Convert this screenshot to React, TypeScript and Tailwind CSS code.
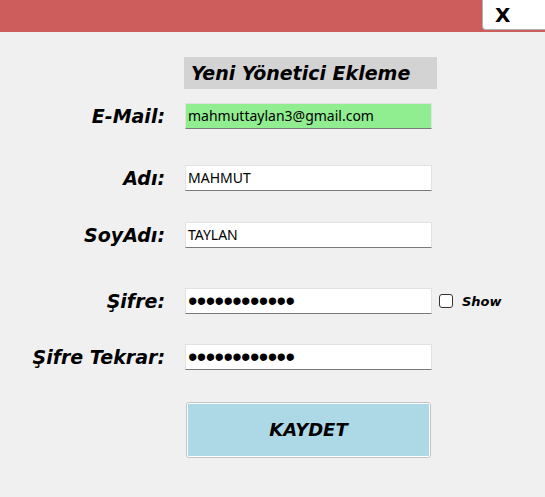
import React from "react";

const comic = { fontFamily: '"DejaVu Sans", sans-serif' };
const ui = { fontFamily: '"Noto Sans", "Open Sans", sans-serif' };

function Field({ value, bg = "bg-white", password = false }: { value: string; bg?: string; password?: boolean }) {
  return (
    <div
      className={`w-[247px] h-[26px] ${bg} border border-[#e2e2e2] border-b-[#7a7a7a] flex items-center pl-[2px] text-[14px] text-black leading-none`}
      style={ui}
    >
      {password ? (
        <span className="text-[27px] tracking-[-0.6px] leading-[20px] h-[20px] flex items-center" style={{ fontFamily: '"Liberation Sans", sans-serif' }}>
          {value}
        </span>
      ) : (
        value
      )}
    </div>
  );
}

function Row({ label, children, className = "" }: { label: string; children: React.ReactNode; className?: string }) {
  return (
    <div className={`flex items-center h-[26px] ${className}`}>
      <div className="w-[165px] text-right text-[19px] font-bold italic text-black leading-none whitespace-nowrap" style={comic}>
        {label}
      </div>
      <div className="ml-[20px] flex items-center">{children}</div>
    </div>
  );
}

export default function App() {
  const dots = "••••••••••••";
  return (
    <div className="w-[545px] h-[497px] bg-[#f0f0f0] overflow-hidden flex flex-col">
      <div className="h-[32px] bg-[#cd5c5c] flex justify-end shrink-0">
        <div className="w-[63px] h-[30px] bg-white border-l border-b border-[#b0b0b0] rounded-bl-[4px] flex items-center pl-[12px]">
          <span className="text-[20px] font-bold text-black leading-none" style={comic}>X</span>
        </div>
      </div>

      <div className="ml-[184px] mt-[25px] w-[253px] h-[32px] bg-[#d3d3d3] flex items-center pl-[7px]">
        <span className="text-[19px] font-bold italic text-black leading-none whitespace-nowrap" style={comic}>
          Yeni Yönetici Ekleme
        </span>
      </div>

      <Row label="E-Mail:" className="mt-[14px]">
        <Field value="mahmuttaylan3@gmail.com" bg="bg-[#90ee90]" />
      </Row>
      <Row label="Adı:" className="mt-[36px]">
        <Field value="MAHMUT" />
      </Row>
      <Row label="SoyAdı:" className="mt-[31px]">
        <Field value="TAYLAN" />
      </Row>
      <Row label="Şifre:" className="mt-[40px]">
        <Field value={dots} password />
        <div className="ml-[7px] w-[14px] h-[14px] bg-white border border-[#333333] rounded-[3px]" />
        <span className="ml-[9px] text-[13px] font-bold italic text-black leading-none" style={comic}>Show</span>
      </Row>
      <Row label="Şifre Tekrar:" className="mt-[30px]">
        <Field value={dots} password />
      </Row>

      <div className="ml-[186px] mt-[32px] w-[245px] h-[56px] border border-[#c4c4c4] rounded-[3px] bg-white p-[1px]">
        <div className="w-full h-full bg-[#add8e6] flex items-center justify-center">
          <span className="text-[18px] font-bold italic text-black leading-none" style={comic}>KAYDET</span>
        </div>
      </div>
    </div>
  );
}
